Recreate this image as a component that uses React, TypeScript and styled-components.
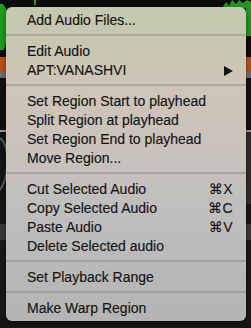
import React from "react";
import styled, { createGlobalStyle } from "styled-components";

const GlobalStyle = createGlobalStyle`
  html, body {
    margin: 0;
    padding: 0;
    background: #141414;
  }
  body {
    font-family: "Liberation Sans", Arial, sans-serif;
  }
`;

const Screen = styled.div`
  position: relative;
  width: 251px;
  height: 328px;
  overflow: hidden;
  background: #151515;
`;

// arrangement behind the menu: lanes stacked top to bottom
const Backdrop = styled.div`
  display: flex;
  flex-direction: column;
  width: 100%;
  height: 100%;
`;

interface LaneProps {
  h: number;
  color: string;
}
const Lane = styled.div<LaneProps>`
  flex: 0 0 ${(p) => p.h}px;
  background: ${(p) => p.color};
`;

const WaveLane = styled.div`
  flex: 0 0 52px;
  background: #0c0c0c;
  svg {
    display: block;
  }
`;

const KnobLane = styled.div`
  flex: 0 0 72px;
  background: #141414;
  display: flex;
  justify-content: space-between;
  svg {
    display: block;
  }
`;

const Menu = styled.div`
  position: absolute;
  left: 6px;
  top: 7px;
  width: 240px;
  box-sizing: border-box;
  padding: 4px 0 3px;
  border-radius: 6px;
  background: linear-gradient(
    180deg,
    #c3c9ae 0%,
    #c9c7b4 14%,
    #cfc4b8 26%,
    #cbc3bb 42%,
    #c2c0bd 58%,
    #bcbcbc 75%,
    #b4b4b4 100%
  );
  box-shadow: 0 2px 6px rgba(0, 0, 0, 0.45);
  color: #141414;
  font-size: 14px;
  -webkit-text-stroke: 0.15px #141414;
`;

const Item = styled.div`
  display: flex;
  align-items: center;
  justify-content: space-between;
  height: 19px;
  line-height: 19px;
  padding: 0 13px 0 21px;
  white-space: nowrap;
`;

const Shortcut = styled.span`
  font-family: "Liberation Sans", "DejaVu Sans", sans-serif;
  letter-spacing: 0.5px;
`;

const Separator = styled.div`
  height: 12px;
  display: flex;
  flex-direction: column;
  &::before {
    content: "";
    margin-top: 4px;
    height: 2px;
    background: rgba(60, 60, 50, 0.2);
  }
`;

const Arrow = () => (
  <svg width="9" height="10" viewBox="0 0 9 10">
    <polygon points="0,0 9,5 0,10" fill="#141414" />
  </svg>
);

type Entry =
  | { label: string; key?: string; sub?: boolean }
  | "sep";

const entries: Entry[] = [
  { label: "Add Audio Files..." },
  "sep",
  { label: "Edit Audio" },
  { label: "APT:VANASHVI", sub: true },
  "sep",
  { label: "Set Region Start to playhead" },
  { label: "Split Region at playhead" },
  { label: "Set Region End to playhead" },
  { label: "Move Region..." },
  "sep",
  { label: "Cut Selected Audio", key: "⌘X" },
  { label: "Copy Selected Audio", key: "⌘C" },
  { label: "Paste Audio", key: "⌘V" },
  { label: "Delete Selected audio" },
  "sep",
  { label: "Set Playback Range" },
  "sep",
  { label: "Make Warp Region" },
];

export default function App() {
  return (
    <Screen>
      <GlobalStyle />
      <Backdrop>
        <WaveLane>
          <svg width="251" height="52" viewBox="0 0 251 52">
            <path
              d="M0,4 C4,2 8,10 8,22 C8,34 6,44 4,50 L0,50 Z"
              fill="#1f9d1f"
            />
            <rect x="34" y="0" width="2" height="5" fill="#1f9d1f" />
            <path
              d="M222,8 L226,2 L229,6 L232,0 L236,4 L239,0 L243,3 L247,0 L251,2 L251,36 L246,36 L246,8 Z"
              fill="#1f9d1f"
            />
          </svg>
        </WaveLane>
        <Lane h={5} color="#0c0c0c" />
        <Lane h={15} color="#b8521a" />
        <Lane h={6} color="#6e6e6e" />
        <Lane h={52} color="#111111" />
        <Lane h={2} color="#9a9a9a" />
        <KnobLane>
          <svg width="8" height="72" viewBox="0 0 8 72">
            <path
              d="M0,6 C6,10 8,22 7,36 C6,46 3,54 0,58"
              stroke="#5a5a5a"
              strokeWidth="2"
              fill="none"
            />
          </svg>
          <svg width="8" height="72" viewBox="0 0 8 72">
            <rect x="0" y="0" width="8" height="72" fill="#2e2e2e" />
          </svg>
        </KnobLane>
        <Lane h={20} color="#171717" />
        <Lane h={16} color="#3a3a3a" />
        <Lane h={82} color="#181818" />
      </Backdrop>
      <Menu>
        {entries.map((e, i) =>
          e === "sep" ? (
            <Separator key={i} />
          ) : (
            <Item key={i}>
              <span>{e.label}</span>
              {e.key && <Shortcut>{e.key}</Shortcut>}
              {e.sub && <Arrow />}
            </Item>
          )
        )}
      </Menu>
    </Screen>
  );
}
